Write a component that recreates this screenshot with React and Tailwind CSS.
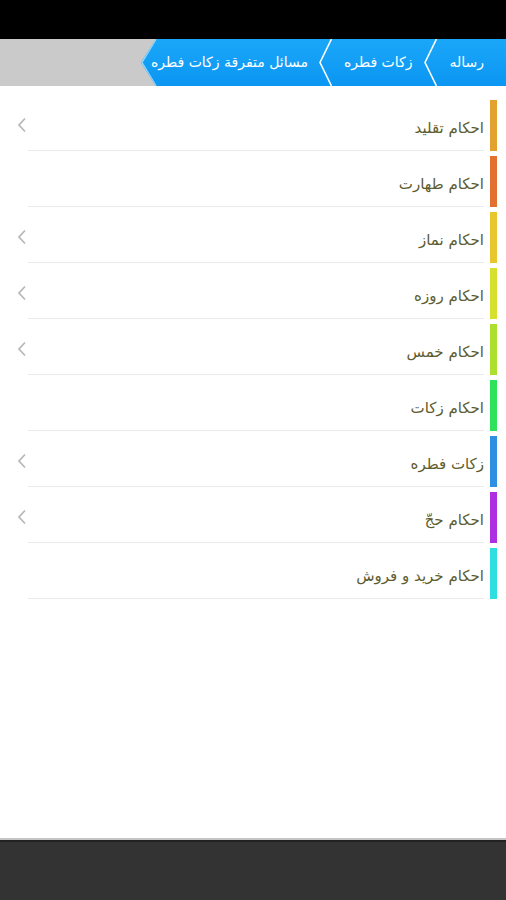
import React from "react";

const rows = [
  { t: "احکام تقلید", c: "#e3a22f", ch: true },
  { t: "احکام طهارت", c: "#e2702f", ch: false },
  { t: "احکام نماز", c: "#e8c62e", ch: true },
  { t: "احکام روزه", c: "#d6e02e", ch: true },
  { t: "احکام خمس", c: "#ade02e", ch: true },
  { t: "احکام زکات", c: "#2ee25c", ch: false },
  { t: "زکات فطره", c: "#2f8fe0", ch: true },
  { t: "احکام حجّ", c: "#ae2fe2", ch: true },
  { t: "احکام خرید و فروش", c: "#2fdee0", ch: false },
];

function Sep() {
  return (
    <svg width="13" height="47" viewBox="0 0 13 47" className="shrink-0">
      <polyline points="12.5,0 1,23.5 12.5,47" fill="none" stroke="#ffffff" strokeWidth="1.6" />
    </svg>
  );
}

function Chevron() {
  return (
    <svg width="10" height="16" viewBox="0 0 10 16">
      <polyline points="8,1.5 2,8 8,14.5" fill="none" stroke="#b9b9b9" strokeWidth="1.8" />
    </svg>
  );
}

export default function App() {
  const font = { fontFamily: '"DejaVu Sans", "Noto Sans", sans-serif' };
  return (
    <div className="flex h-[900px] w-[506px] flex-col bg-white" style={font}>
      <div className="h-[39px] bg-black" />
      <div className="flex h-[47px] bg-[#cacaca]">
        <div className="relative ml-auto flex h-full items-center bg-gradient-to-b from-[#1aa7f9] to-[#0a96f2] [clip-path:polygon(15px_0,100%_0,100%_100%,15px_100%,0_50%)]">
          <svg width="16" height="47" viewBox="0 0 16 47" className="absolute left-0 top-0">
            <polyline points="15,0 0.8,23.5 15,47" fill="none" stroke="#8fd6ff" strokeWidth="1.6" />
          </svg>
          <span dir="rtl" className="pl-[10px] pr-[11px] text-[14px] text-white whitespace-nowrap">مسائل متفرقة زکات فطره</span>
          <Sep />
          <span dir="rtl" className="px-[12px] text-[14px] text-white whitespace-nowrap">زکات فطره</span>
          <Sep />
          <span dir="rtl" className="pl-[12px] pr-[22px] text-[14px] text-white whitespace-nowrap">رساله</span>
        </div>
      </div>
      <div className="flex-1 pt-[12px]">
        {rows.map((r, i) => (
          <div key={i} className="flex h-[56px] pl-[17px] pr-[9px]">
            <div className="flex h-[53px] w-[11px] items-center">
              {r.ch ? <Chevron /> : null}
            </div>
            <div className="mr-[6px] flex h-[53px] flex-1 items-center justify-end border-b border-[#ececec] pt-[8px]">
              <span dir="rtl" className="text-[15px] text-[#5c5c2e]">{r.t}</span>
            </div>
            <div className="mt-[2px] h-[51px] w-[7px]" style={{ backgroundColor: r.c }} />
          </div>
        ))}
      </div>
      <div className="h-[62px] border-t-2 border-[#c4c4c4] bg-[#333333]">
        <div className="h-[2px] bg-[#222222]" />
      </div>
    </div>
  );
}
